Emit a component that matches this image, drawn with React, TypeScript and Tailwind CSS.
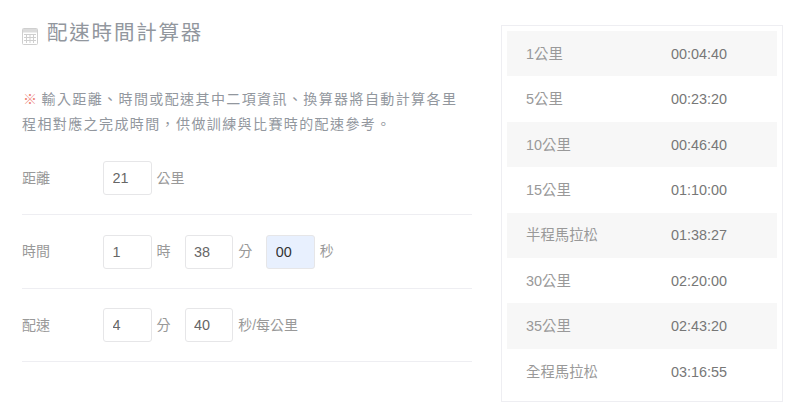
const font = { fontFamily: '"Liberation Sans", "Noto Sans CJK TC", sans-serif' };

const results: [string, string][] = [
  ["1公里", "00:04:40"],
  ["5公里", "00:23:20"],
  ["10公里", "00:46:40"],
  ["15公里", "01:10:00"],
  ["半程馬拉松", "01:38:27"],
  ["30公里", "02:20:00"],
  ["35公里", "02:43:20"],
  ["全程馬拉松", "03:16:55"],
];

function Box({ value, active }: { value: string; active?: boolean }) {
  return (
    <input
      readOnly
      value={value}
      className={
        "h-[34px] w-[48.6px] rounded-[3px] border border-[#e6e6e8] pl-[8.5px] text-[14.4px] outline-none " +
        (active ? "bg-[#e8f0fe] text-[#333333]" : "bg-white text-[#666666]")
      }
    />
  );
}

function Unit({ children, wide }: { children: string; wide?: boolean }) {
  return <span className={"pl-[5px] text-[14px] text-[#999999] " + (wide ? "" : "w-[33px]")}>{children}</span>;
}

function Row({ label, children }: { label: string; children: React.ReactNode }) {
  return (
    <div className="flex items-center border-b border-[#eeeef2] pt-[19.6px] pb-[19px] first:pt-0">
      <span className="w-[81px] text-[14px] text-[#999999]">{label}</span>
      {children}
    </div>
  );
}

export default function App() {
  return (
    <div className="flex h-[410px] w-[805px] overflow-hidden bg-white pl-[22px]" style={font}>
      <div className="w-[450px]">
        <div className="flex h-[68px] items-start pt-[18px]">
          <svg width="16" height="17" viewBox="0 0 16 17" className="mt-[10px] mr-[9px]" fill="none" stroke="#cfcfcf">
            <rect x="0.5" y="0.5" width="15" height="16" rx="1" />
            <rect x="1" y="1" width="14" height="3.5" fill="#dcdcdc" stroke="none" />
            <path d="M2 6.5h12M2 9.5h12M2 12.5h12M4.5 6v9M8 6v9M11.5 6v9" />
          </svg>
          <h1 className="text-[20.5px] leading-[30px] tracking-[1.8px] text-[#92979e]">配速時間計算器</h1>
        </div>
        <p className="mt-[19px] text-[14px] leading-[25px] tracking-[1.4px] text-[#92979e]">
          <span className="inline-block w-[19.5px] pl-[1px] text-[#ee8378]">※</span>輸入距離、時間或配速其中二項資訊、換算器將自動計算各里程相對應之完成時間，供做訓練與比賽時的配速參考。
        </p>
        <div className="mt-[24px]">
          <Row label="距離">
            <Box value="21" />
            <Unit wide>公里</Unit>
          </Row>
          <Row label="時間">
            <Box value="1" />
            <Unit>時</Unit>
            <Box value="38" />
            <Unit>分</Unit>
            <Box value="00" active />
            <Unit>秒</Unit>
          </Row>
          <Row label="配速">
            <Box value="4" />
            <Unit>分</Unit>
            <Box value="40" />
            <Unit wide>秒/每公里</Unit>
          </Row>
        </div>
      </div>
      <div className="mt-[25px] ml-[29px] h-[377px] w-[282px] border border-[#eeeef2] p-[5px]">
        {results.map(([name, time], i) => (
          <div
            key={name}
            className={"flex h-[45.4px] items-center pt-[2px] pl-[19px] text-[14.4px] " + (i % 2 === 0 ? "bg-[#f7f7f7]" : "bg-white")}
          >
            <span className="w-[145px] text-[#999999]">{name}</span>
            <span className="text-[#777777]">{time}</span>
          </div>
        ))}
      </div>
    </div>
  );
}
